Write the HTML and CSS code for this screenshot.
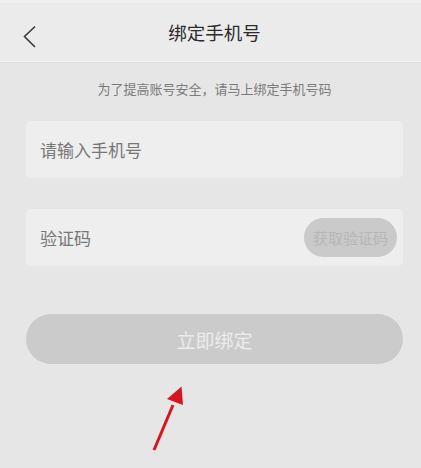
FILE: index.html
```html
<!DOCTYPE html>
<html lang="zh-CN">
<head>
<meta charset="utf-8">
<title>绑定手机号</title>
<link rel="stylesheet" href="styles.css">
</head>
<body>
<div class="status"></div>
<header class="header">
  <svg class="back" width="16" height="24" viewBox="0 0 16 24"><path d="M13 1.5 L2.5 11.5 L13 22" fill="none" stroke="#3a3a3a" stroke-width="1.6"/></svg>
  <h1 class="title">绑定手机号</h1>
</header>
<main class="content">
  <p class="tip">为了提高账号安全，请马上绑定手机号码</p>
  <div class="field">
    <span class="placeholder">请输入手机号</span>
  </div>
  <div class="field field-code">
    <span class="placeholder">验证码</span>
    <span class="code-btn">获取验证码</span>
  </div>
  <div class="submit">立即绑定</div>
</main>
<svg class="arrow" width="60" height="80" viewBox="0 0 60 80">
  <line x1="24" y1="79" x2="43" y2="34" stroke="#d3161f" stroke-width="3"/>
  <polygon points="51.5,15.5 37,28 53,34" fill="#d3161f"/>
</svg>
</body>
</html>
```
FILE: styles.css
```css
html, body {
  margin: 0;
  padding: 0;
}
body {
  width: 421px;
  height: 468px;
  background: #e6e6e6;
  font-family: "Noto Sans CJK SC", "Noto Sans", sans-serif;
  position: relative;
  overflow: hidden;
}
.status {
  height: 3px;
  background: #efefef;
}
.header {
  height: 58px;
  background: #ebebeb;
  border-bottom: 1px solid #f2f2f2;
  box-shadow: 0 1px 1px rgba(0,0,0,0.03);
  display: flex;
  align-items: center;
  justify-content: center;
  position: relative;
}
.back {
  position: absolute;
  left: 22px;
  top: 22px;
}
.title {
  margin: 0 0 0 8px;
  font-size: 18.5px;
  font-weight: 400;
  color: #2b2b2b;
  letter-spacing: 0;
}
.content {
  margin: 0 18px 0 26px;
  display: flex;
  flex-direction: column;
}
.tip {
  margin: 16px 0 0;
  height: 22px;
  line-height: 22px;
  font-size: 13px;
  color: #7b7b7b;
  text-align: center;
}
.field {
  margin-top: 21px;
  height: 57px;
  background: #eeeeee;
  border-radius: 5px;
  display: flex;
  align-items: center;
  padding: 0 6px 0 14px;
}
.field-code {
  margin-top: 31px;
  justify-content: space-between;
}
.placeholder {
  font-size: 17px;
  color: #777777;
  line-height: 1;
}
.code-btn {
  width: 93px;
  height: 39px;
  border-radius: 20px;
  background: #cacaca;
  color: #b6b6b6;
  font-size: 15px;
  display: flex;
  align-items: center;
  justify-content: center;
}
.submit {
  margin-top: 48px;
  height: 50px;
  border-radius: 25px;
  background: #cbcbcb;
  color: #ececec;
  font-size: 19px;
  display: flex;
  align-items: center;
  justify-content: center;
}
.arrow {
  position: absolute;
  left: 130px;
  top: 371px;
}
```
